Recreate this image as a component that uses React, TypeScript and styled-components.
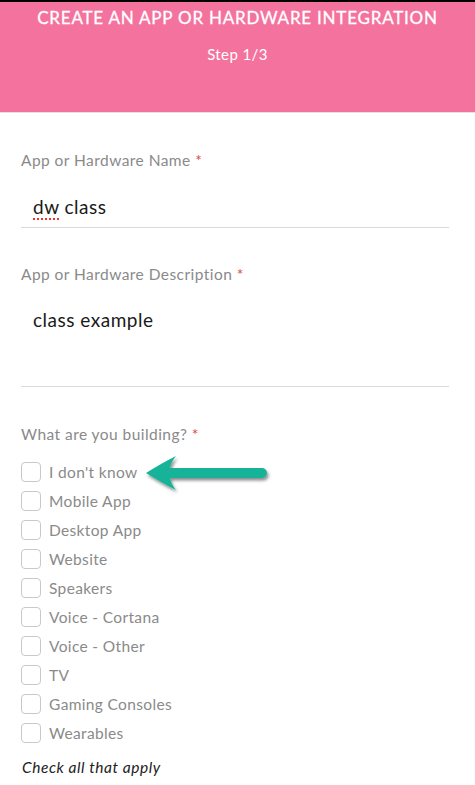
import React from "react";
import styled, { createGlobalStyle } from "styled-components";

const Global = createGlobalStyle`
  html, body { margin: 0; padding: 0; background: #fff; }
  body { font-family: Lato, "Open Sans", "Liberation Sans", sans-serif; }
  * { box-sizing: border-box; }
`;

const Page = styled.div`
  width: 475px;
  border-top: 2px solid #000;
`;

const Header = styled.header`
  height: 111px;
  background: #f4739e;
  border-bottom: 1px solid #e3e3e3;
  color: #fff;
  display: flex;
  flex-direction: column;
  align-items: center;
  padding-top: 5px;
`;

const Title = styled.h1`
  margin: 0;
  font-size: 17px;
  font-weight: 400;
  line-height: 22px;
  letter-spacing: 0.78px;
  text-transform: uppercase;
  white-space: nowrap;
  -webkit-text-stroke: 0.3px #fff;
`;

const Step = styled.div`
  margin-top: 15px;
  font-size: 15px;
  line-height: 20px;
  letter-spacing: 0.4px;
`;

const Form = styled.form`
  padding: 37px 26px 0 21px;
  display: flex;
  flex-direction: column;
`;

const Label = styled.label<{ $gap: number }>`
  display: block;
  margin-top: ${(p) => p.$gap}px;
  font-size: 15.5px;
  line-height: 20px;
  letter-spacing: 0.45px;
  color: #8a8a8a;
`;

const Req = styled.span`
  color: #e0474c;
`;

const Field = styled.div<{ $height: number; $padTop: number }>`
  height: ${(p) => p.$height}px;
  padding: ${(p) => p.$padTop}px 0 0 12px;
  border-bottom: 1px solid #d9d9d9;
  font-size: 19px;
  line-height: 24px;
  letter-spacing: 0.5px;
  color: #1a1a1a;
`;

const Misspelled = styled.span`
  text-decoration: underline dotted #e33;
  text-decoration-thickness: 2px;
  text-underline-offset: 4px;
`;

const Options = styled.div`
  position: relative;
  margin-top: 13px;
  display: flex;
  flex-direction: column;
`;

const Option = styled.label`
  display: flex;
  align-items: center;
  gap: 8px;
  height: 29px;
  font-size: 15.5px;
  letter-spacing: 0.35px;
  color: #8a8a8a;
`;

const Box = styled.span`
  width: 20px;
  height: 20px;
  border: 1px solid #c9c9c9;
  border-radius: 4px;
  background: #fff;
  flex: none;
`;

const Hint = styled.div`
  margin-top: 10px;
  font-size: 15.5px;
  line-height: 20px;
  letter-spacing: 0.55px;
  font-style: italic;
  color: #222;
  padding-left: 1px;
`;

const Arrow = styled.svg`
  position: absolute;
  left: 119px;
  top: -8px;
  width: 130px;
  height: 50px;
  overflow: visible;
`;

const options = [
  "I don't know",
  "Mobile App",
  "Desktop App",
  "Website",
  "Speakers",
  "Voice - Cortana",
  "Voice - Other",
  "TV",
  "Gaming Consoles",
  "Wearables",
];

export default function App() {
  return (
    <Page>
      <Global />
      <Header>
        <Title>Create an App or Hardware Integration</Title>
        <Step>Step 1/3</Step>
      </Header>
      <Form>
        <Label $gap={0}>
          App or Hardware Name <Req>*</Req>
        </Label>
        <Field $height={58} $padTop={25}>
          <Misspelled>dw</Misspelled> class
        </Field>
        <Label $gap={36}>
          App or Hardware Description <Req>*</Req>
        </Label>
        <Field $height={103} $padTop={24}>
          class example
        </Field>
        <Label $gap={37}>
          What are you building? <Req>*</Req>
        </Label>
        <Options>
          {options.map((o) => (
            <Option key={o}>
              <Box />
              {o}
            </Option>
          ))}
          <Arrow viewBox="0 0 130 50">
            <defs>
              <filter id="sh" x="-10%" y="-20%" width="130%" height="160%">
                <feDropShadow dx="1.5" dy="2.5" stdDeviation="1.5" floodColor="#000" floodOpacity="0.45" />
              </filter>
            </defs>
            <path
              filter="url(#sh)"
              fill="#19b398"
              d="M6 24 Q22 14 36 7 Q31 13 30 19 L122 19 A5 5 0 0 1 122 29 L30 29 Q31 35 36 41 Q22 34 6 24 Z"
            />
          </Arrow>
        </Options>
        <Hint>Check all that apply</Hint>
      </Form>
    </Page>
  );
}
